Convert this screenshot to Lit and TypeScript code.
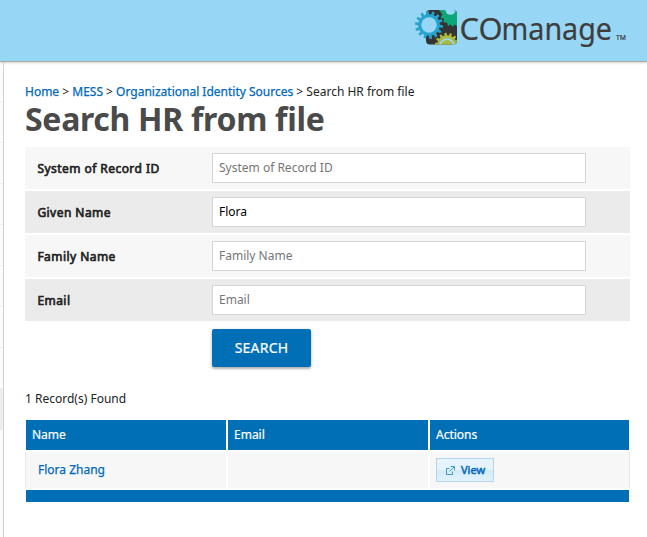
import { LitElement, html, svg, css } from "lit";
import { customElement, state } from "lit/decorators.js";

function gear(cx: number, cy: number, r: number, tooth: number, n: number, turn = 0): string {
  const pts: string[] = [];
  const step = (Math.PI * 2) / n;
  for (let i = 0; i < n; i++) {
    const a = i * step + turn;
    for (const [f, rad] of [[-0.3, r], [-0.2, r + tooth], [0.2, r + tooth], [0.3, r]]) {
      const t = a + f * step;
      pts.push(`${(cx + rad * Math.cos(t)).toFixed(2)} ${(cy + rad * Math.sin(t)).toFixed(2)}`);
    }
  }
  return `M${pts.join("L")}Z`;
}

@customElement("co-logo")
class CoLogo extends LitElement {
  static styles = css`
    :host { display: block; width: 216px; height: 44px; }
    svg { display: block; }
    .word { font-family: "Noto Sans", sans-serif; font-size: 31.5px; fill: #3d3d3d; stroke: #3d3d3d; stroke-width: 0.2; }
    .tm { font-family: "Noto Sans", sans-serif; font-size: 7px; fill: #3d3d3d; stroke: #3d3d3d; stroke-width: 0.2; }
  `;
  render() {
    return html`<svg width="216" height="44" viewBox="414 7 216 44" role="img" aria-label="COmanage">
      <defs><clipPath id="tile"><rect x="426" y="10" width="31" height="34.5" rx="4"></rect></clipPath></defs>
      ${svg`
        <g clip-path="url(#tile)">
          <rect x="426" y="10" width="31" height="35" fill="#343434"/>
          <path d="M439 10H457V26L454.5 24.5L453 27L450.5 24.5L448 26L447 22.5L443.5 22.5L444 19L440.5 17.5L442.5 14.5Z" fill="#0ca678"/>
          <circle cx="450.5" cy="9.5" r="5.2" fill="#98d6f5"/>
          <path d="${gear(447, 45, 9.8, 2.4, 14, 0.1)}" fill="#a9b93d"/>
          <circle cx="447" cy="46" r="6.8" fill="none" stroke="#98d6f5" stroke-width="1.7"/>
        </g>
        <circle cx="429" cy="25" r="8" fill="#98d6f5"/>
        <path d="${gear(429, 25, 10.8, 3.2, 14, 0.1)}" fill="#27a3cf"/>
        <circle cx="429" cy="25" r="7.7" fill="#98d6f5"/>
      `}
      <text class="word" x="459.5" y="40.3" textLength="43" lengthAdjust="spacingAndGlyphs">CO</text>
      <text class="word" x="501.5" y="40.3" textLength="110.5" lengthAdjust="spacingAndGlyphs">manage</text>
      <text class="tm" x="616" y="40" textLength="10" lengthAdjust="spacingAndGlyphs">TM</text>
    </svg>`;
  }
}

@customElement("app-root")
class AppRoot extends LitElement {
  @state() fields = [
    { label: "System of Record ID", value: "" },
    { label: "Given Name", value: "Flora" },
    { label: "Family Name", value: "" },
    { label: "Email", value: "" },
  ];

  static styles = css`
    * { box-sizing: border-box; }
    :host { display: flex; flex-direction: column; height: 537px; overflow: hidden; background: #fff;
      font: 12px/18px "Noto Sans", sans-serif; color: #222; }
    a { color: #0068bd; text-decoration: none; -webkit-text-stroke: 0.25px #0068bd; }
    .banner { flex: none; height: 61px; background: #98d6f5; display: flex; justify-content: flex-end;
      padding: 7px 17px 0 0; box-shadow: 0 1px 1px #aaa, 0 2px 3px #ddd; z-index: 1; }
    .body { flex: 1; display: flex; min-height: 0; }
    .side { width: 4px; flex: none; border-right: 1px solid #d3d3d3; background: #fcfcfc; }
    .item { height: 41px; border-bottom: 1px solid #eee; }
    .item.current { background: #eee; }
    .main { flex: 1; padding: 22px 17px 0 21px; }
    .crumbs { height: 17px; white-space: nowrap; }
    h1 { margin: 0; height: 47px; font-size: 32px; line-height: 38px; font-weight: 700; letter-spacing: -0.3px; color: #4a4a4a; white-space: nowrap; }
    .form { display: grid; gap: 2px; }
    .row { height: 42px; display: flex; align-items: center; background: #f7f7f7; padding-left: 12px; }
    .row:nth-child(even) { background: #ebebeb; }
    label { width: 175px; -webkit-text-stroke: 0.65px #222; letter-spacing: 0.45px; padding: 1px 0 0 0.4px; }
    input { width: 374px; height: 30px; border: 1px solid #d5d5d5; background: #fff; padding: 0 6px 1px;
      font: inherit; color: #000; outline: none; border-radius: 0; }
    input::placeholder { color: #757575; opacity: 1; }
    .search { display: block; margin: 8px 0 0 187px; width: 99px; height: 38px; padding: 0; border: 0; border-radius: 2px;
      background: #006fb5; color: #fff; font: 14px/38px "Noto Sans", sans-serif; letter-spacing: 0.2px;
      box-shadow: 0 2px 2px rgba(0,0,0,.2), 0 1px 4px rgba(0,0,0,.18); -webkit-text-stroke: 0.2px #fff; }
    .found { margin-top: 23px; height: 30px; }
    .table { width: 605px; display: grid; grid-template-columns: 201px 200px 200px; column-gap: 2px; }
    .th { height: 30px; background: #006fb5; color: #fff; padding: 0 6px; line-height: 29px; -webkit-text-stroke: 0.2px #fff; }
    .th:first-child { margin-left: 1px; }
    .th:nth-child(3) { margin-right: 1px; }
    .td { height: 36px; margin: 2px 0; background: #f7f7f7; display: flex; align-items: center; padding: 0 6px; }
    .td:nth-child(4) { border-left: 1px solid #e8e8e8; padding-left: 12px; }
    .td:nth-child(6) { border-right: 1px solid #e8e8e8; }
    .foot { grid-column: 1 / -1; height: 12px; margin: 0 1px; background: #006fb5; }
    .view { display: flex; align-items: center; width: 58px; height: 24px; border: 1px solid #b5d6e8;
      background: linear-gradient(#e4f3fc 50%, #d4ebf8 50%, #e1f2fc); padding-left: 9px; gap: 6px;
      font-size: 11px; line-height: 22px; -webkit-text-stroke: 0.5px #0068bd; }
    .view svg { display: block; }
  `;

  render() {
    return html`
      <header class="banner"><co-logo></co-logo></header>
      <div class="body">
        <nav class="side">
          ${Array.from({ length: 9 }, (_, i) => html`<div class="item ${i === 8 ? "current" : ""}"></div>`)}
        </nav>
        <main class="main">
          <div class="crumbs"><a href="#">Home</a> &gt; <a href="#">MESS</a> &gt; <a href="#">Organizational Identity Sources</a> &gt; Search HR from file</div>
          <h1>Search HR from file</h1>
          <div class="form">
            ${this.fields.map((f) => html`<div class="row"><label>${f.label}</label><input .value=${f.value} placeholder=${f.label}></div>`)}
          </div>
          <button class="search">SEARCH</button>
          <div class="found">1 Record(s) Found</div>
          <div class="table">
            <div class="th">Name</div><div class="th">Email</div><div class="th">Actions</div>
            <div class="td"><a href="#">Flora Zhang</a></div><div class="td"></div>
            <div class="td"><a class="view" href="#"><svg width="9" height="9" viewBox="0 0 9 9" fill="none" stroke="#3c9bc7"><path d="M3.5 2.5H.5V8.5H6.5V5.5M4.5 .5H8.5V4.5M8 1L3.5 5.5"/></svg><span>View</span></a></div>
            <div class="foot"></div>
          </div>
        </main>
      </div>`;
  }
}
